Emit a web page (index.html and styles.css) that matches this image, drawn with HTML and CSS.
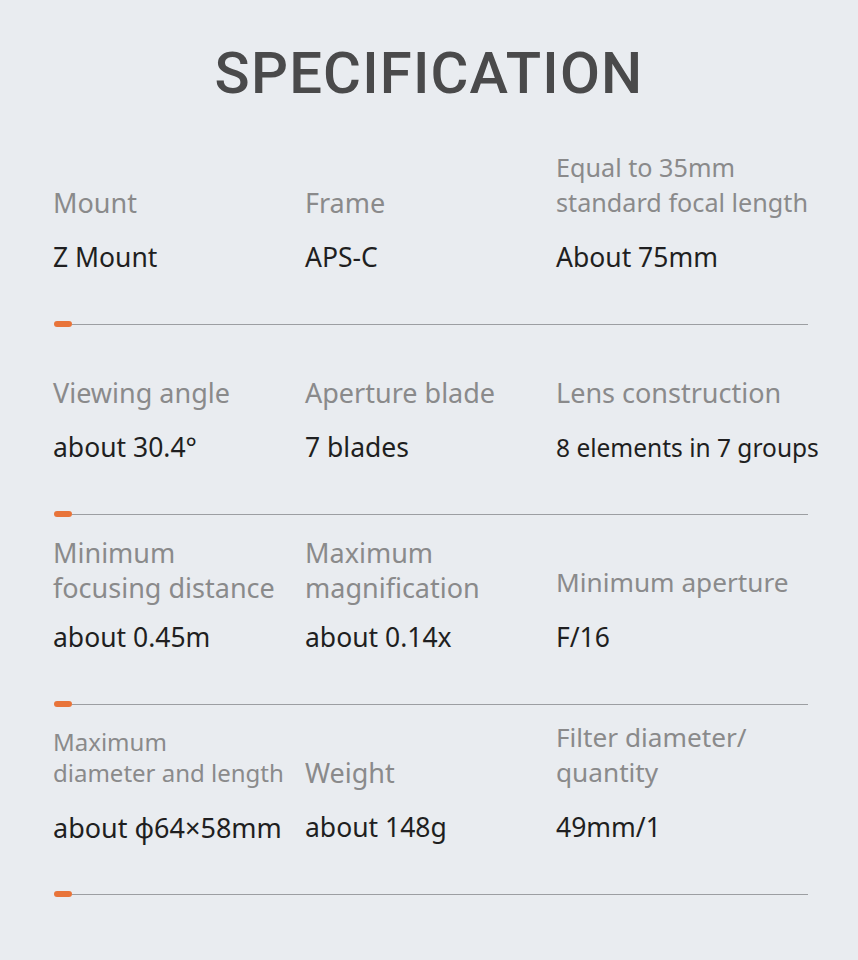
FILE: index.html
```html
<!DOCTYPE html>
<html lang="en">
<head>
<meta charset="utf-8">
<title>Specification</title>
<link rel="stylesheet" href="styles.css">
</head>
<body>
<main class="page">
  <h1 class="title">SPECIFICATION</h1>

  <section class="spec-row">
    <div class="spec-grid">
      <div class="label">Mount</div>
      <div class="label">Frame</div>
      <div class="label label--narrow">Equal to 35mm<br>standard focal length</div>
      <div class="value">Z Mount</div>
      <div class="value">APS-C</div>
      <div class="value">About 75mm</div>
    </div>
    <div class="divider"><span class="pill"></span><span class="rule"></span></div>
  </section>

  <section class="spec-row">
    <div class="spec-grid">
      <div class="label">Viewing angle</div>
      <div class="label">Aperture blade</div>
      <div class="label">Lens construction</div>
      <div class="value">about 30.4°</div>
      <div class="value">7 blades</div>
      <div class="value value--small">8 elements in 7 groups</div>
    </div>
    <div class="divider"><span class="pill"></span><span class="rule"></span></div>
  </section>

  <section class="spec-row">
    <div class="spec-grid">
      <div class="label label--low">Minimum<br>focusing distance</div>
      <div class="label label--low">Maximum<br>magnification</div>
      <div class="label label--compact">Minimum aperture</div>
      <div class="value">about 0.45m</div>
      <div class="value">about 0.14x</div>
      <div class="value">F/16</div>
    </div>
    <div class="divider"><span class="pill"></span><span class="rule"></span></div>
  </section>

  <section class="spec-row">
    <div class="spec-grid">
      <div class="label label--small">Maximum<br>diameter and length</div>
      <div class="label">Weight</div>
      <div class="label label--compact">Filter diameter/<br>quantity</div>
      <div class="value value--mid">about ϕ64×58mm</div>
      <div class="value">about 148g</div>
      <div class="value">49mm/1</div>
    </div>
    <div class="divider"><span class="pill"></span><span class="rule"></span></div>
  </section>
</main>
</body>
</html>
```

FILE: styles.css
```css
html, body {
  margin: 0;
  padding: 0;
}

body {
  background: #e9ecf0;
  font-family: "Noto Sans", Roboto, "Liberation Sans", sans-serif;
  width: 858px;
  min-height: 960px;
}

.page {
  padding: 44px 50px 0 53px;
}

.title {
  margin: 0 0 0 -53px;
  width: 858px;
  text-align: center;
  font-family: Roboto, "Noto Sans", sans-serif;
  font-size: 58px;
  line-height: 58px;
  font-weight: 500;
  letter-spacing: 1.2px;
  color: #4a4a4b;
  padding-bottom: 35px;
}

.spec-row {
  display: flex;
  flex-direction: column;
  padding-top: 13px;
}

.spec-grid {
  display: grid;
  grid-template-columns: 252px 251px 1fr;
  grid-template-rows: 70px 35px;
  row-gap: 20px;
}

.label {
  align-self: end;
  font-size: 27px;
  line-height: 35px;
  color: #8a8a8b;
  white-space: nowrap;
}

.label--narrow {
  font-size: 25.2px;
}

.label--compact {
  font-size: 26.2px;
}

.label--low {
  margin-bottom: -5px;
}

.label--small {
  font-size: 24px;
  line-height: 31px;
  margin-bottom: 2px;
}

.value {
  font-size: 26.5px;
  line-height: 35px;
  color: #1f1f21;
  white-space: nowrap;
}

.value--small {
  font-size: 24.5px;
}

.value--mid {
  font-size: 27px;
}

.divider {
  display: flex;
  align-items: center;
  height: 6px;
  margin-top: 46px;
}

.pill {
  width: 18px;
  height: 6px;
  border-radius: 3px;
  background: #e8743a;
  flex: none;
  margin-left: 1px;
}

.rule {
  flex: 1;
  height: 1px;
  background: #9c9ea2;
}
```
